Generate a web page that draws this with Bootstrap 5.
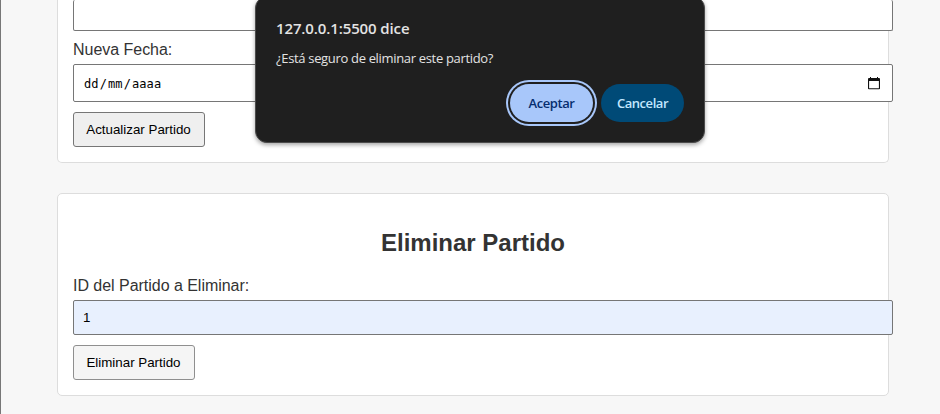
<!DOCTYPE html>
<html lang="es">
<head>
<meta charset="utf-8">
<meta name="viewport" content="width=device-width, initial-scale=1">
<title>Partidos</title>
<link href="https://cdn.jsdelivr.net/npm/bootstrap@5.3.0/dist/css/bootstrap.min.css" rel="stylesheet">
<style>
body{background:#f7f7f7;color:#333;font:16px/18px "Liberation Sans",Arial,sans-serif;height:414px;border-left:1px solid #777}
.panel-list{width:832px;margin-left:56px;gap:30px}
.panel{border:1px solid #ddd;border-radius:5px;background:#fff;padding:0 15px 15px}
.panel-update{height:163px;border-top:0;border-radius:0 0 5px 5px}
.panel-delete{height:203px}
.field{width:820px;height:35px;border:1px solid #767676;border-radius:2px;padding:0 9px;background:#fff;color:#000;font-size:13.33px}
.field-top{height:31px;border-top:0}
.field-date{height:38px;font:12px "DejaVu Sans Mono",monospace;letter-spacing:.1px;padding:2px 12px 0 9px}
.field-date svg{margin-top:-2px}
.field-date span span{padding:0 1px}
.field-filled{background:#e8f0fe}
.label-text{height:18px;margin:10px 0 5px;display:block;letter-spacing:-.03px}
.push{border:1px solid #767676;border-radius:3px;background:#efefef;color:#000;font-size:13.33px;line-height:15px;height:35px;padding:0 1px 0 0;margin-top:10px}
.push-update{width:132px}
.push-delete{width:122px;background:#f5f5f5;border-color:#8f8f8f}
h2.panel-title{font-size:24px;line-height:28px;font-weight:700;margin:35px 0 20px}
.prompt{left:254px;top:-4px;width:450px;height:147px;border-radius:12px;background:#1f1f1f;border:1px solid #4b4b4b;box-shadow:0 2px 4px rgba(0,0,0,.35);padding:21px 20px 20px;color:#e3e3e3;font-family:"Segoe UI","Open Sans","Noto Sans",sans-serif}
.prompt-title{font-size:15px;font-weight:600;line-height:20px;letter-spacing:-.12px}
.prompt-text{font-size:13px;line-height:18px;margin-top:11px;letter-spacing:-.33px}
.prompt-actions{margin-top:17px;gap:8px}
.pill{height:38px;border:0;border-radius:19px;font-size:13px;font-weight:600;padding:0;letter-spacing:-.45px}
.pill-ok{width:83px;background:#a8c7fa;color:#062e6f;box-shadow:0 0 0 2px #1f1f1f,0 0 0 4px #a8c7fa}
.pill-cancel{width:83px;background:#004a77;color:#c2e7ff}
</style>
</head>
<body class="overflow-hidden position-relative">
<main class="panel-list d-flex flex-column">
  <section class="panel panel-update">
    <div class="field field-top"></div>
    <span class="label-text">Nueva Fecha:</span>
    <div class="field field-date d-flex align-items-center justify-content-between">
      <span><span>dd</span>/<span>mm</span>/<span>aaaa</span></span>
      <svg width="12" height="13" viewBox="0 0 12 13" fill="#111"><path fill-rule="evenodd" d="M2 0h1v1h6V0h1v1h1q1 0 1 1v9.5q0 .8-1 .8H1q-1 0-1-.8V2q0-1 1-1h1zM1.1 4v7.2h9.8V4z"/></svg>
    </div>
    <button class="push push-update" type="button">Actualizar Partido</button>
  </section>
  <section class="panel panel-delete">
    <h2 class="panel-title text-center">Eliminar Partido</h2>
    <label class="label-text mt-0" for="matchId">ID del Partido a Eliminar:</label>
    <input class="field field-filled d-block" id="matchId" type="text" value="1">
    <button class="push push-delete" type="button">Eliminar Partido</button>
  </section>
</main>
<div class="prompt position-absolute" role="dialog">
  <div class="prompt-title"><span>127.0.0.1:5500 dice</span></div>
  <div class="prompt-text"><span>¿Está seguro de eliminar este partido?</span></div>
  <div class="prompt-actions d-flex justify-content-end">
    <button class="pill pill-ok" type="button">Aceptar</button>
    <button class="pill pill-cancel" type="button">Cancelar</button>
  </div>
</div>
<script src="https://cdn.jsdelivr.net/npm/bootstrap@5.3.0/dist/js/bootstrap.bundle.min.js"></script>
</body>
</html>
